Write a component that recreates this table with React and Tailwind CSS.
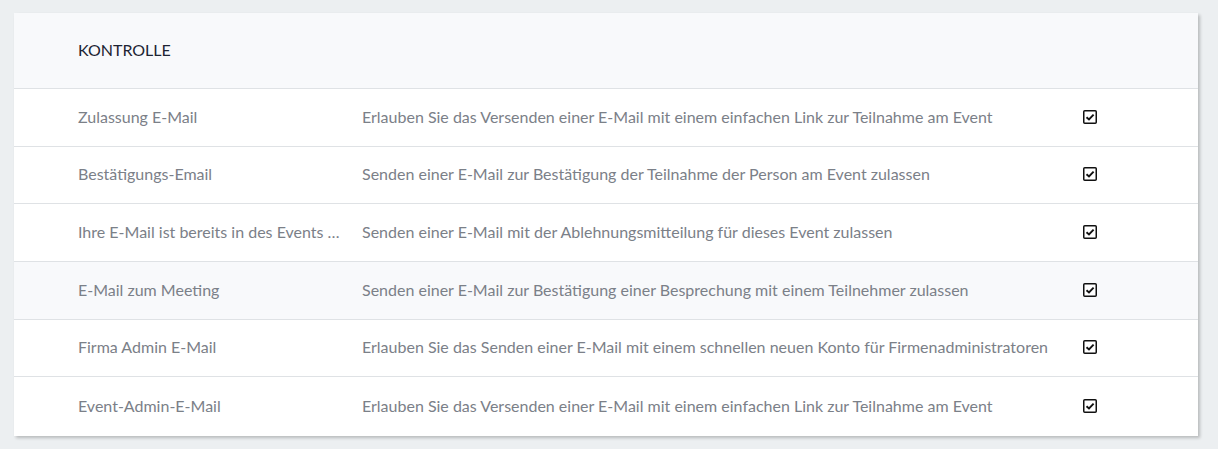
import React from "react";

const rows = [
  {
    name: "Zulassung E-Mail",
    desc: "Erlauben Sie das Versenden einer E-Mail mit einem einfachen Link zur Teilnahme am Event",
    h: "h-[58px]",
  },
  {
    name: "Bestätigungs-Email",
    desc: "Senden einer E-Mail zur Bestätigung der Teilnahme der Person am Event zulassen",
    h: "h-[57px]",
  },
  {
    name: "Ihre E-Mail ist bereits in des Events …",
    desc: "Senden einer E-Mail mit der Ablehnungsmitteilung für dieses Event zulassen",
    h: "h-[58px]",
  },
  {
    name: "E-Mail zum Meeting",
    desc: "Senden einer E-Mail zur Bestätigung einer Besprechung mit einem Teilnehmer zulassen",
    h: "h-[58px]",
    shaded: true,
  },
  {
    name: "Firma Admin E-Mail",
    desc: "Erlauben Sie das Senden einer E-Mail mit einem schnellen neuen Konto für Firmenadministratoren",
    h: "h-[57px]",
  },
  {
    name: "Event-Admin-E-Mail",
    desc: "Erlauben Sie das Versenden einer E-Mail mit einem einfachen Link zur Teilnahme am Event",
    h: "h-[59px]",
  },
];

const Check = () => (
  <svg width="14" height="14" viewBox="0 0 14 14">
    <rect x="0.75" y="0.75" width="12.5" height="12.5" rx="1" fill="#fff" stroke="#111" strokeWidth="1.5" />
    <path d="M3.5 7.2 L6 9.5 L10.6 4.6" fill="none" stroke="#111" strokeWidth="1.9" />
  </svg>
);

const App = () => {
  return (
    <div
      className="w-[1218px] h-[449px] bg-[#eceff1] pt-[13px] pl-[14px]"
      style={{ fontFamily: "Lato, 'Open Sans', sans-serif" }}
    >
      <div className="w-[1184px] bg-white shadow-[2px_2px_3px_rgba(0,0,0,0.22)]">
        {/* Header */}
        <div className="h-[76px] bg-[#f8f9fb] border-b border-[#dfe2e5] flex items-center pl-[64px] pb-[2px]">
          <span className="text-[16px] text-[#1d2433]">KONTROLLE</span>
        </div>

        {rows.map((r, i) => (
          <div
            key={i}
            className={`${r.h} grid grid-cols-[284px_721px_auto] items-center pl-[64px] pb-[2px] text-[16px] text-[#7b8088] ${
              i < rows.length - 1 ? "border-b border-[#dfe2e5]" : ""
            } ${r.shaded ? "bg-[#f8f9fb]" : ""}`}
          >
            <span className="whitespace-nowrap">{r.name}</span>
            <span className="whitespace-nowrap">{r.desc}</span>
            <span className="flex">
              <Check />
            </span>
          </div>
        ))}
      </div>
    </div>
  );
};

export default App;
